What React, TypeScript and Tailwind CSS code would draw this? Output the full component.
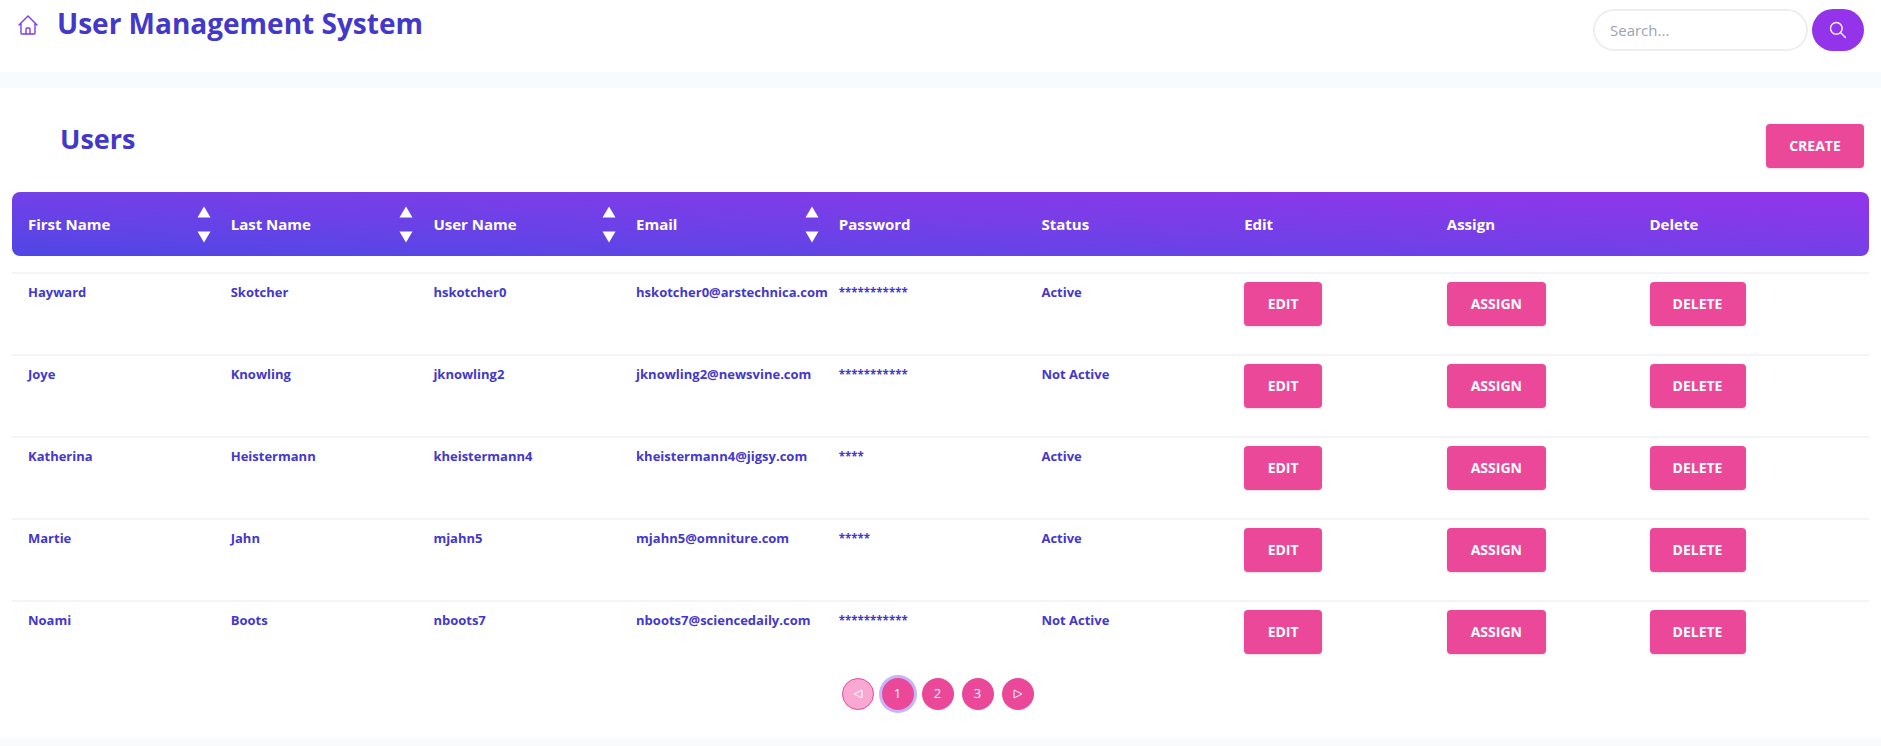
import { HiOutlineHome, HiOutlineSearch } from "react-icons/hi";

const rows = [
  ["Hayward", "Skotcher", "hskotcher0", "hskotcher0@arstechnica.com", "***********", "Active"],
  ["Joye", "Knowling", "jknowling2", "jknowling2@newsvine.com", "***********", "Not Active"],
  ["Katherina", "Heistermann", "kheistermann4", "kheistermann4@jigsy.com", "****", "Active"],
  ["Martie", "Jahn", "mjahn5", "mjahn5@omniture.com", "*****", "Active"],
  ["Noami", "Boots", "nboots7", "nboots7@sciencedaily.com", "***********", "Not Active"],
];
const heads = ["First Name", "Last Name", "User Name", "Email", "Password", "Status", "Edit", "Assign", "Delete"];

function Btn({ label, w }: { label: string; w: string }) {
  return (
    <button className={`${w} h-11 pb-[2px] rounded bg-[#ec4899] text-white text-[14px] font-bold shadow-sm uppercase`}>{label}</button>
  );
}

function Sort() {
  return (
    <div className="flex flex-col items-center gap-[13px] mr-[4px]">
      <svg width="14" height="12" viewBox="0 0 14 12"><path d="M7 0.5 L13.5 11.5 L0.5 11.5 Z" fill="#fff" /></svg>
      <svg width="14" height="12" viewBox="0 0 14 12"><path d="M0.5 0.5 L13.5 0.5 L7 11.5 Z" fill="#fff" /></svg>
    </div>
  );
}

export default function App() {
  return (
    <div className="min-h-[746px] bg-[#f9fafb] font-['Open_Sans','Noto_Sans',sans-serif] overflow-hidden">
      <header className="h-[72px] bg-white flex justify-between pr-[17px]">
        <div className="flex items-start pl-[16px] pt-[3px]">
          <HiOutlineHome className="w-[24px] h-[24px] mt-[10px] text-[#7c3aed] [&_path]:stroke-[1.4]" />
          <h1 className="ml-[17px] text-[28px] leading-[40px] font-bold text-[#4338ca]">User Management System</h1>
        </div>
        <div className="flex items-start gap-[4px] pt-[9px]">
          <input
            placeholder="Search..."
            className="w-[215px] h-[42px] rounded-full border-2 border-[#eceef1] bg-white pl-[15px] text-[15px] placeholder:text-[#9ca3af] outline-none"
          />
          <button className="w-[52px] h-[42px] rounded-full bg-[#9333ea] flex items-center justify-center">
            <HiOutlineSearch className="w-[20px] h-[20px] text-white [&_path]:stroke-[1.6]" />
          </button>
        </div>
      </header>

      <main className="mt-[16px] bg-white h-[650px] px-[12px]">
        <div className="flex justify-between items-start pt-[36px] pr-[5px]">
          <h2 className="ml-[48px] text-[27px] leading-[40px] font-bold text-[#4338ca] -mt-[5px]">Users</h2>
          <button className="w-[98px] h-[44px] pb-[2px] rounded bg-[#ec4899] text-white text-[14px] font-bold shadow-sm">CREATE</button>
        </div>

        <div className="mt-[24px] h-[64px] rounded-lg bg-gradient-to-tr from-[#4f46e5] to-[#9333ea] grid grid-cols-[repeat(8,202.7px)_1fr] items-center">
          {heads.map((h, i) => (
            <div key={h} className="pl-[16px] flex items-center justify-between text-white text-[15px] font-bold">
              <span>{h}</span>
              {i < 4 && <Sort />}
            </div>
          ))}
        </div>

        <div className="mt-[16px]">
          {rows.map((r) => (
            <div key={r[0]} className="h-[82px] border-t-2 border-[#f3f4f6] grid grid-cols-[repeat(8,202.7px)_1fr] items-start">
              {r.map((c, i) => (
                <div key={i} className={`pl-[16px] pt-[8px] leading-[20px] font-bold text-[#4338ca] whitespace-nowrap ${i === 4 ? "text-[11.5px] mt-[1px]" : "text-[13px]"}`}>{c}</div>
              ))}
              <div className="pl-[16px] pt-[8px]"><Btn label="Edit" w="w-[78px]" /></div>
              <div className="pl-[16px] pt-[8px]"><Btn label="Assign" w="w-[99px]" /></div>
              <div className="pl-[16px] pt-[8px]"><Btn label="Delete" w="w-[96px]" /></div>
            </div>
          ))}
        </div>

        <div className="flex justify-center gap-[8px] pr-[6px] -mt-[4px]">
          <span className="w-[32px] h-[32px] rounded-full border border-[#ec4899] bg-[#f9a8d4] flex items-center justify-center">
            <svg width="10" height="10" viewBox="0 0 10 10"><path d="M9 1 L9 9 L1 5 Z" fill="none" stroke="#fff" strokeWidth="1" /></svg>
          </span>
          <span className="w-[32px] h-[32px] rounded-full bg-[#ec4899] ring-[3px] ring-[#c4b5fd] flex items-center justify-center text-white text-[13px]">1</span>
          <span className="w-[32px] h-[32px] rounded-full bg-[#ec4899] flex items-center justify-center text-white text-[13px]">2</span>
          <span className="w-[32px] h-[32px] rounded-full bg-[#ec4899] flex items-center justify-center text-white text-[13px]">3</span>
          <span className="w-[32px] h-[32px] rounded-full bg-[#ec4899] flex items-center justify-center">
            <svg width="10" height="10" viewBox="0 0 10 10"><path d="M1 1 L1 9 L9 5 Z" fill="none" stroke="#fff" strokeWidth="1" /></svg>
          </span>
        </div>
      </main>
    </div>
  );
}
